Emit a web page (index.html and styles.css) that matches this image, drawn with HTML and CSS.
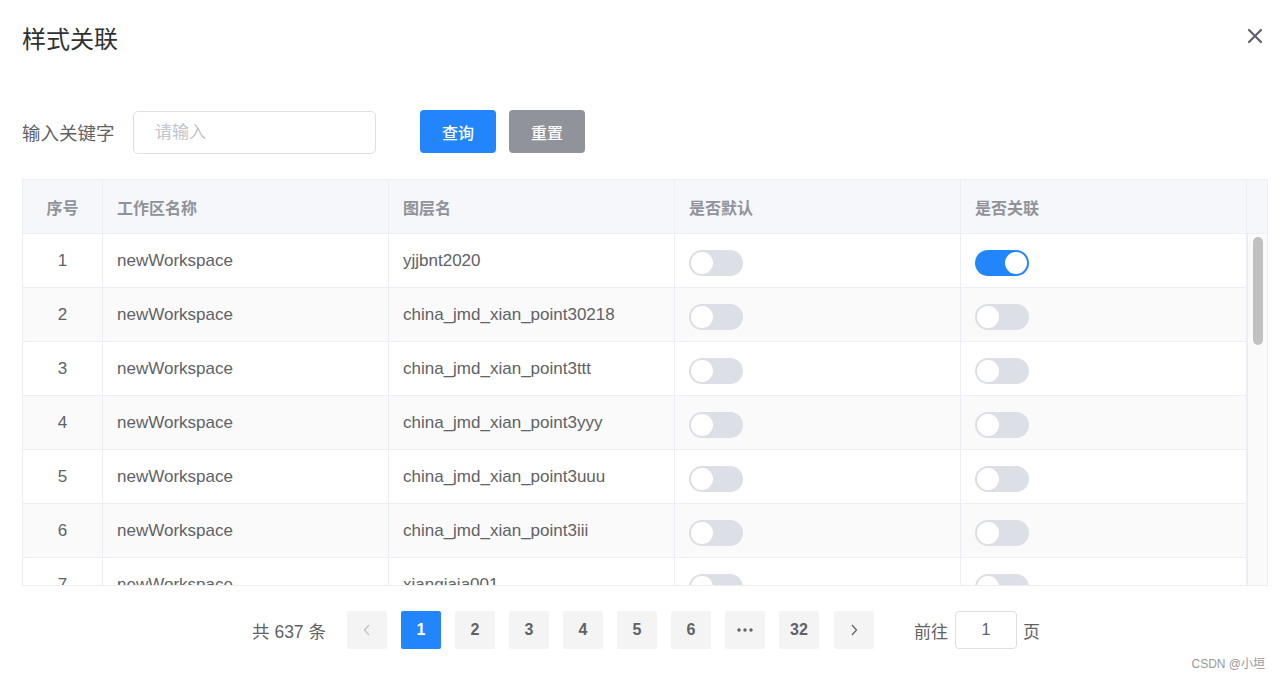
FILE: index.html
```html
<!DOCTYPE html>
<html lang="zh-CN">
<head>
<meta charset="utf-8">
<title>样式关联</title>
<link rel="stylesheet" href="styles.css">
</head>
<body>
<div class="dialog">
  <div class="header">
    <div class="title">样式关联</div>
    <svg class="close" width="16" height="16" viewBox="0 0 16 16"><path d="M2 2 L14 14 M14 2 L2 14" stroke="#5f6166" stroke-width="2.2" stroke-linecap="round" fill="none"/></svg>
  </div>

  <div class="search">
    <label class="label">输入关键字</label>
    <input class="input" type="text" placeholder="请输入">
    <button class="btn btn-primary">查询</button>
    <button class="btn btn-info">重置</button>
  </div>

  <div class="table">
    <div class="thead">
      <div class="th center">序号</div>
      <div class="th">工作区名称</div>
      <div class="th">图层名</div>
      <div class="th">是否默认</div>
      <div class="th">是否关联</div>
      <div class="th gutter-h"></div>
    </div>
    <div class="tbody">
      <div class="rows">
        <div class="tr">
          <div class="td center">1</div><div class="td">newWorkspace</div><div class="td">yjjbnt2020</div>
          <div class="td"><span class="switch"></span></div><div class="td"><span class="switch on"></span></div>
        </div>
        <div class="tr striped">
          <div class="td center">2</div><div class="td">newWorkspace</div><div class="td">china_jmd_xian_point30218</div>
          <div class="td"><span class="switch"></span></div><div class="td"><span class="switch"></span></div>
        </div>
        <div class="tr">
          <div class="td center">3</div><div class="td">newWorkspace</div><div class="td">china_jmd_xian_point3ttt</div>
          <div class="td"><span class="switch"></span></div><div class="td"><span class="switch"></span></div>
        </div>
        <div class="tr striped">
          <div class="td center">4</div><div class="td">newWorkspace</div><div class="td">china_jmd_xian_point3yyy</div>
          <div class="td"><span class="switch"></span></div><div class="td"><span class="switch"></span></div>
        </div>
        <div class="tr">
          <div class="td center">5</div><div class="td">newWorkspace</div><div class="td">china_jmd_xian_point3uuu</div>
          <div class="td"><span class="switch"></span></div><div class="td"><span class="switch"></span></div>
        </div>
        <div class="tr striped">
          <div class="td center">6</div><div class="td">newWorkspace</div><div class="td">china_jmd_xian_point3iii</div>
          <div class="td"><span class="switch"></span></div><div class="td"><span class="switch"></span></div>
        </div>
        <div class="tr">
          <div class="td center">7</div><div class="td">newWorkspace</div><div class="td">xiangjaja001</div>
          <div class="td"><span class="switch"></span></div><div class="td"><span class="switch"></span></div>
        </div>
      </div>
      <div class="gutter"><div class="thumb"></div></div>
    </div>
  </div>

  <div class="pagination">
    <span class="total">共 637 条</span>
    <button class="pg prev"><svg width="10" height="12" viewBox="0 0 10 12"><path d="M7 1 L2.5 6 L7 11" stroke="#c0c4cc" stroke-width="1.3" fill="none"/></svg></button>
    <button class="pg active">1</button>
    <button class="pg">2</button>
    <button class="pg">3</button>
    <button class="pg">4</button>
    <button class="pg">5</button>
    <button class="pg">6</button>
    <button class="pg more" aria-label="更多页"><svg width="16" height="4" viewBox="0 0 16 4"><circle cx="2" cy="2" r="1.7" fill="#606266"/><circle cx="8" cy="2" r="1.7" fill="#606266"/><circle cx="14" cy="2" r="1.7" fill="#606266"/></svg></button>
    <button class="pg">32</button>
    <button class="pg next"><svg width="10" height="12" viewBox="0 0 10 12"><path d="M3 1 L7.5 6 L3 11" stroke="#606266" stroke-width="1.3" fill="none"/></svg></button>
    <span class="goto">前往</span>
    <input class="page-input" type="text" value="1">
    <span class="page-unit">页</span>
  </div>

  <div class="watermark">CSDN @小垣</div>
</div>
</body>
</html>
```

FILE: styles.css
```css
* { box-sizing: border-box; }
html, body { margin: 0; padding: 0; background: #fff; }
body {
  font-family: "Liberation Sans", "Noto Sans CJK SC", sans-serif;
  color: #606266;
  width: 1280px;
  height: 681px;
  overflow: hidden;
}
.dialog { padding: 0 12px 0 22px; }

.header {
  display: flex;
  justify-content: space-between;
  align-items: center;
  padding: 26px 5px 0 0;
  height: 54px;
}
.title {
  font-size: 24px;
  line-height: 28px;
  color: #303133;
}
.close { margin-top: -8px; }

.search {
  display: flex;
  align-items: center;
  margin-top: 56px;
  height: 43px;
}
.label {
  width: 111px;
  font-size: 18.5px;
  color: #606266;
}
.input {
  width: 243px;
  height: 43px;
  margin-top: 2px;
  border: 1px solid #dcdfe6;
  border-radius: 5px;
  padding: 0 0 0 21px;
  font-family: inherit;
  font-size: 17px;
  color: #606266;
  outline: none;
}
.input::placeholder { color: #c0c4cc; }
.btn {
  width: 76px;
  height: 43px;
  border: none;
  border-radius: 4px;
  color: #fff;
  font-family: inherit;
  font-size: 16px;
  font-weight: 500;
  padding: 0;
}
.btn-primary { background: #2385fc; margin-left: 44px; }
.btn-info { background: #909399; margin-left: 13px; }

.table {
  margin-top: 26px;
  width: 1246px;
  border: 1px solid #ebeef5;
}
.thead {
  display: grid;
  grid-template-columns: 80px 286px 286px 286px 286px 20px;
  background: #f5f7fa;
}
.th {
  height: 54px;
  border-right: 1px solid #ebeef5;
  border-bottom: 1px solid #ebeef5;
  display: flex;
  align-items: center;
  padding-left: 14px;
  font-size: 16px;
  font-weight: bold;
  color: #909399;
}
.th.gutter-h { border-right: none; padding: 0; }
.center { justify-content: center; padding-left: 0 !important; }

.tbody {
  display: flex;
  height: 351px;
  overflow: hidden;
}
.rows { width: 1224px; overflow: hidden; }
.tr {
  display: grid;
  grid-template-columns: 80px 286px 286px 286px 286px;
  background: #fff;
}
.tr.striped { background: #fafafa; }
.td {
  height: 54px;
  border-right: 1px solid #ebeef5;
  border-bottom: 1px solid #ebeef5;
  display: flex;
  align-items: center;
  padding-left: 14px;
  padding-top: 1px;
  font-size: 17px;
  color: #606266;
}
.gutter {
  width: 20px;
  background: #fafafa;
  border-left: 1px solid #ebeef5;
  padding: 3px 4px 0 5px;
}
.thumb {
  width: 10px;
  height: 108px;
  border-radius: 5px;
  background: #c1c1c1;
}

.switch {
  display: inline-block;
  width: 54px;
  height: 26px;
  margin-top: 3px;
  border-radius: 13px;
  background: #dcdfe6;
  padding: 2px;
}
.switch::after {
  content: "";
  display: block;
  width: 22px;
  height: 22px;
  border-radius: 50%;
  background: #fff;
}
.switch.on { background: #2385fc; }
.switch.on::after { margin-left: 28px; }

.pagination {
  display: flex;
  align-items: center;
  justify-content: center;
  margin-top: 25px;
  height: 38px;
  padding-left: 2px;
}
.total {
  font-size: 17.5px;
  color: #606266;
  margin-right: 14px;
}
.pg {
  width: 40px;
  height: 38px;
  margin: 0 7px;
  border: none;
  border-radius: 2px;
  background: #f4f4f5;
  color: #606266;
  font-family: inherit;
  font-size: 16px;
  font-weight: bold;
  padding: 0;
  display: flex;
  align-items: center;
  justify-content: center;
}
.pg.active { background: #2385fc; color: #fff; }
.pg.next { margin-left: 8px; }
.goto {
  font-size: 17px;
  color: #606266;
  margin-left: 33px;
}
.page-input {
  width: 62px;
  height: 38px;
  margin: 0 6px 0 7px;
  border: 1px solid #dcdfe6;
  border-radius: 4px;
  text-align: center;
  font-family: inherit;
  font-size: 16px;
  color: #606266;
  outline: none;
  padding: 0;
}
.page-unit { font-size: 17px; color: #606266; }

.watermark {
  margin-top: 8px;
  text-align: right;
  padding-right: 3px;
  font-size: 12px;
  line-height: 14px;
  color: #999;
}
```
